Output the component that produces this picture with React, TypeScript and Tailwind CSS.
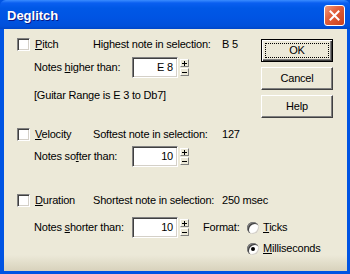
import React from "react";

function Check() {
  return (
    <span className="block w-[13px] h-[13px] shrink-0 bg-white border border-t-[#808080] border-l-[#808080] border-r-white border-b-white shadow-[inset_1px_1px_0_#404040,inset_-1px_-1px_0_#d4d0c8]" />
  );
}

function Radio({ on }: { on?: boolean }) {
  return (
    <span className="flex items-center justify-center w-[12px] h-[12px] shrink-0 rounded-full bg-white shadow-[inset_1px_1px_0_#808080,inset_2px_2px_0_#404040,inset_-1px_-1px_0_#d4d0c8]">
      {on && <span className="block w-[4px] h-[4px] rounded-full bg-black" />}
    </span>
  );
}

function SpinBtn({ minus }: { minus?: boolean }) {
  return (
    <span className="flex items-center justify-center w-[9px] h-[8px] bg-[#ECE9D8] border border-t-white border-l-white border-r-[#808080] border-b-[#808080]">
      <svg width="5" height="5" viewBox="0 0 5 5" shapeRendering="crispEdges">
        <rect x="0" y="2" width="5" height="1" fill="#000" />
        {!minus && <rect x="2" y="0" width="1" height="5" fill="#000" />}
      </svg>
    </span>
  );
}

function Spin({ value }: { value: string }) {
  return (
    <div className="flex items-center shrink-0">
      <div className="w-[46px] h-[21px] bg-white border border-t-[#808080] border-l-[#808080] border-r-white border-b-white shadow-[inset_1px_1px_0_#404040,inset_-1px_-1px_0_#d4d0c8] flex items-center justify-end pr-[4px]">
        {value}
      </div>
      <div className="ml-[2px] flex flex-col gap-[1px]">
        <SpinBtn />
        <SpinBtn minus />
      </div>
    </div>
  );
}

function Button({ label, def }: { label: string; def?: boolean }) {
  if (def) {
    return (
      <div className="relative w-[72px] h-[23px] flex items-center justify-center bg-[#ECE9D8] border border-black shadow-[inset_1px_1px_0_#fff,inset_-1px_-1px_0_#404040,inset_-2px_-2px_0_#808080]">
        {label}
        <span className="absolute inset-[3px] border border-dotted border-black" />
      </div>
    );
  }
  return (
    <div className="w-[72px] h-[23px] flex items-center justify-center bg-[#ECE9D8] border border-t-white border-l-white border-r-[#404040] border-b-[#404040] shadow-[inset_-1px_-1px_0_#808080]">
      {label}
    </div>
  );
}

export default function App() {
  return (
    <div className="w-[350px] h-[274px] flex flex-col bg-[#0054E3] font-['Liberation_Sans',Arial,sans-serif] text-[11px] text-black tracking-[-0.2px] leading-none">
      {/* title bar */}
      <div className="h-[29px] shrink-0 flex items-start justify-between pl-[7px] pr-[5px] rounded-t-[6px] bg-[linear-gradient(to_bottom,#3a8cff_0px,#0a5ff0_3px,#0058e6_8px,#0054e3_18px,#0050da_26px,#0046c8_29px)]">
        <span className="mt-[9px] text-white font-bold text-[13px] tracking-normal [text-shadow:1px_1px_#0a1883]">
          Deglitch
        </span>
        <span className="mt-[5px] w-[21px] h-[21px] rounded-[3px] border border-white flex items-center justify-center bg-[linear-gradient(135deg,#f09a7c_0%,#e2603c_40%,#c9401c_100%)]">
          <svg width="11" height="11" viewBox="0 0 11 11">
            <path d="M1.5 1.5 L9.5 9.5 M9.5 1.5 L1.5 9.5" stroke="#fff" strokeWidth="2" strokeLinecap="square" />
          </svg>
        </span>
      </div>

      {/* client area */}
      <div className="flex-1 ml-[4px] mr-[3px] mb-[3px] flex flex-col bg-[#ECE9D8]">
        <div className="flex">
          <div className="flex-1 min-w-0 flex flex-col pl-[13px] pt-[9px] whitespace-nowrap">
            {/* Pitch */}
            <div className="h-[13px] flex items-center">
              <Check />
              <span className="ml-[5px] w-[58px] shrink-0"><u>P</u>itch</span>
              <span className="w-[129px] shrink-0">Highest note in selection:</span>
              <span>B 5</span>
            </div>
            <div className="mt-[6px] pl-[17px] flex items-center">
              <span className="w-[98px] shrink-0">Notes <u>h</u>igher than:</span>
              <Spin value="E 8" />
            </div>
            <div className="mt-[11px] h-[13px] pl-[17px] flex items-center">
              [Guitar Range is E 3 to Db7]
            </div>

            {/* Velocity */}
            <div className="mt-[26px] h-[13px] flex items-center">
              <Check />
              <span className="ml-[5px] w-[58px] shrink-0"><u>V</u>elocity</span>
              <span className="w-[129px] shrink-0">Softest note in selection:</span>
              <span>127</span>
            </div>
            <div className="mt-[5px] pl-[17px] flex items-center">
              <span className="w-[98px] shrink-0">Notes so<u>f</u>ter than:</span>
              <Spin value="10" />
            </div>

            {/* Duration */}
            <div className="mt-[27px] h-[13px] flex items-center">
              <Check />
              <span className="ml-[5px] w-[58px] shrink-0"><u>D</u>uration</span>
              <span className="w-[129px] shrink-0">Shortest note in selection:</span>
              <span>250 msec</span>
            </div>
            <div className="mt-[10px] pl-[17px] flex items-center">
              <span className="w-[98px] shrink-0">Notes <u>s</u>horter than:</span>
              <Spin value="10" />
              <span className="ml-[14px] w-[44px] shrink-0">Format:</span>
              <Radio />
              <span className="ml-[4px]"><u>T</u>icks</span>
            </div>
            <div className="mt-[4px] h-[13px] pl-[230px] flex items-center">
              <Radio on />
              <span className="ml-[4px]"><u>M</u>illiseconds</span>
            </div>
          </div>

          <div className="shrink-0 mr-[14px] pt-[10px] flex flex-col gap-[5px]">
            <Button label="OK" def />
            <Button label="Cancel" />
            <Button label="Help" />
          </div>
        </div>
        <div className="flex-1 bg-gradient-to-b from-[#ECE9D8] to-[#d8d2bc]" />
      </div>
    </div>
  );
}
